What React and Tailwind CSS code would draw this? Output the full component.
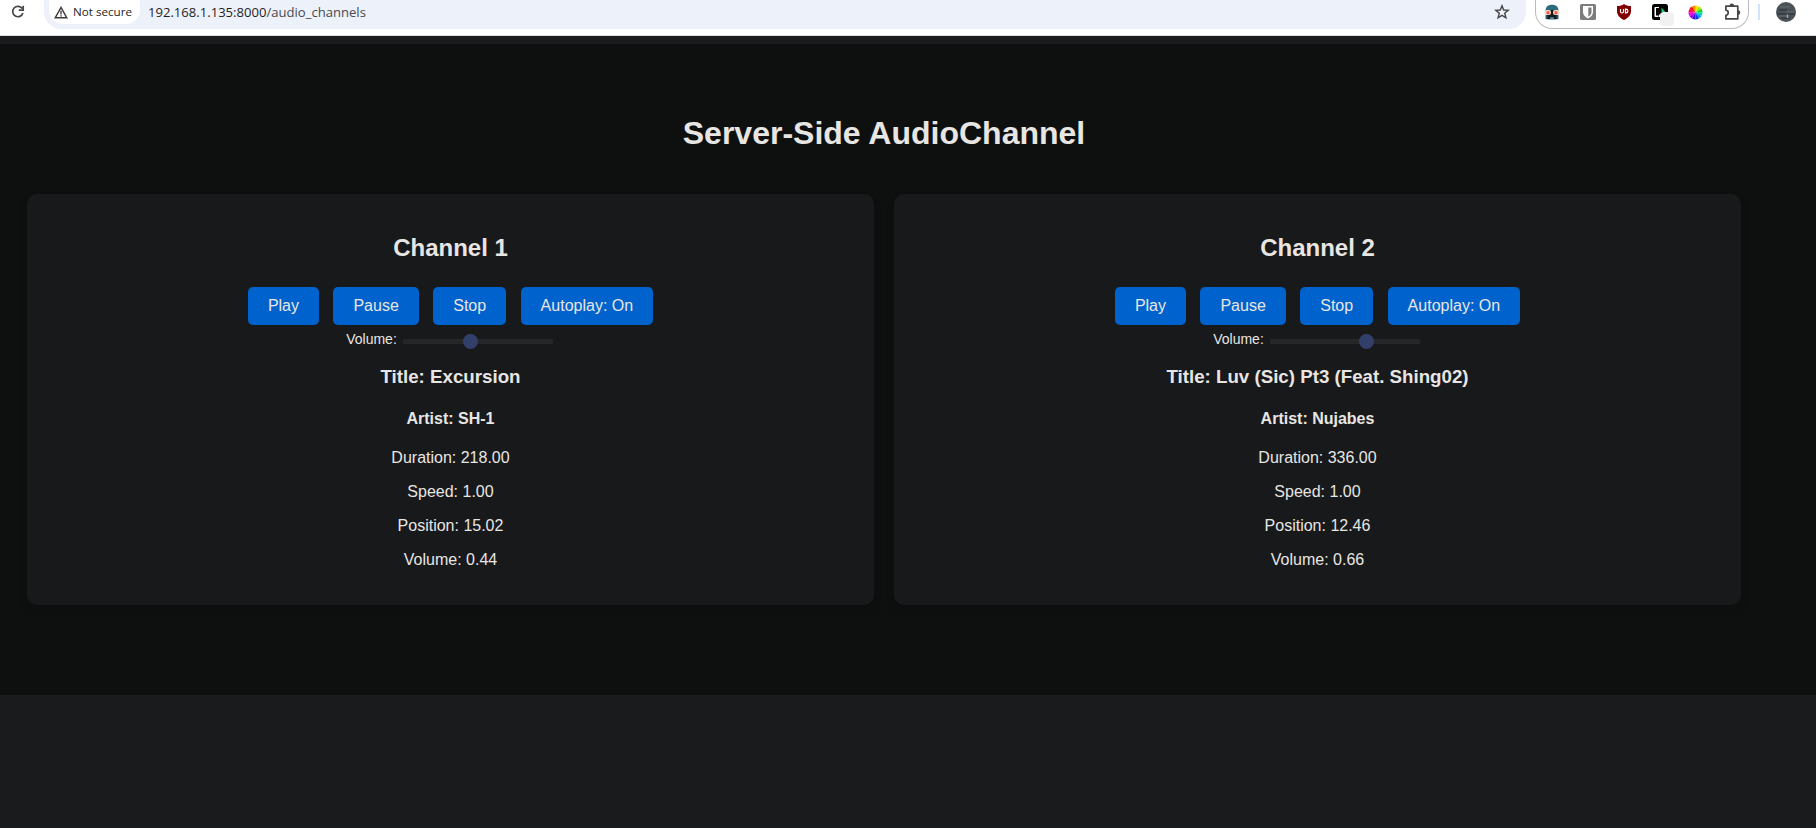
const channels = [
  { name: "Channel 1", title: "Excursion", artist: "SH-1", duration: "218.00", speed: "1.00", position: "15.02", volume: "0.44" },
  { name: "Channel 2", title: "Luv (Sic) Pt3 (Feat. Shing02)", artist: "Nujabes", duration: "336.00", speed: "1.00", position: "12.46", volume: "0.66" },
];

const wheel = ["#ffe600", "#9be800", "#00e020", "#00d8b0", "#00a2ff", "#1430ff", "#3a10d0", "#9a00e8", "#f000e0", "#ff0060", "#ff1000", "#ff8a00"];

function wedge(i) {
  const a = ((i * 30 - 90) * Math.PI) / 180;
  const b = (((i + 1) * 30 - 90) * Math.PI) / 180;
  return `M7.5 7.5L${7.5 + 7 * Math.cos(a)} ${7.5 + 7 * Math.sin(a)}A7 7 0 0 1 ${7.5 + 7 * Math.cos(b)} ${7.5 + 7 * Math.sin(b)}Z`;
}

function Extensions() {
  return (
    <div className="-mt-1 flex h-[33px] w-[214px] shrink-0 items-start rounded-b-[17px] border border-t-0 border-[#b9bbbe] pl-[8px] pt-[8px]">
      <svg width="16" height="16" viewBox="0 0 16 16" className="shrink-0">
        <path d="M1.500 7C1.500 2.800 4 .8 8 .8s6.500 2 6.500 6.200z" fill="#2b6b7c" />
        <path d="M1.500 11h13v4.200h-13z" fill="#2b5f6e" />
        <path d="M3.500 6h9v9.200h-9z" fill="#14191d" />
        <path d="M6 13.200h4v2H6z" fill="#4c8797" />
        <rect x=".8" y="6" width="6.200" height="5" rx="2" fill="#f6d3c6" />
        <rect x="9" y="6" width="6.200" height="5" rx="2" fill="#f6d3c6" />
        <circle cx="4" cy="8.800" r="1.700" fill="#ee6048" />
        <circle cx="12" cy="8.800" r="1.700" fill="#ee6048" />
      </svg>
      <svg width="16" height="16" viewBox="0 0 16 16" className="ml-[20px] shrink-0">
        <rect width="16" height="16" rx="1.500" fill="#7d7d7d" />
        <path d="M3 2h10v6c0 3-2 5-5 6.500C5 13 3 11 3 8z" fill="#fff" />
        <path d="M8.300 3.500h3.200V8c0 2-1.300 3.500-3.200 4.700z" fill="#7d7d7d" />
      </svg>
      <svg width="16" height="16" viewBox="0 0 16 16" className="ml-[20px] shrink-0">
        <path d="M8 0c2 1.500 4 2 7 2v5c0 4-2.500 7-7 9-4.500-2-7-5-7-9V2c3 0 5-.5 7-2z" fill="#800000" />
        <path d="M4.500 5v2.500a1.500 1.500 0 0 0 3 0V5M9.500 5.100v3.800h.5a1.900 1.900 0 0 0 0-3.800z" fill="none" stroke="#fff" strokeWidth="1.200" />
      </svg>
      <svg width="22" height="22" viewBox="0 0 22 22" className="ml-[20px] shrink-0">
        <rect width="16" height="16" rx="2.500" fill="#000" />
        <path d="M2.500 3.500Q2.500 3 3.500 3H7v1H4v7.500h2.500V13H3.500q-1 0-1-1z" fill="#fff" />
        <path d="M7 10.500h1.200V13H7z" fill="#fff" />
        <path d="M9.500 3.500l4 4.500h-4z" fill="#20c878" />
        <rect x="8" y="8" width="14" height="14" rx="3.500" fill="#f1f1f1" />
      </svg>
      <svg width="15" height="15" viewBox="0 0 15 15" className="ml-[14px] mt-px shrink-0">
        {wheel.map((c, i) => <path key={c} d={wedge(i)} fill={c} />)}
      </svg>
      <svg width="18" height="18" viewBox="0 0 18 18" className="-mt-px ml-[20px] shrink-0" fill="none" stroke="#474747" strokeWidth="1.700" strokeLinejoin="round">
        <path d="M2.900 3.100H14.800V15.900H2.900V12.400C4.300 12.200 5.200 11.200 5.200 9.800S4.300 7.400 2.900 7.200Z" />
        <path d="M6.500 2.900a2.300 2.300 0 0 1 4.600 0zM15 7.300a2.300 2.300 0 0 1 0 4.600z" fill="#474747" stroke="none" />
      </svg>
    </div>
  );
}

function BrowserBar() {
  return (
    <header className="flex h-9 items-start overflow-hidden border-b border-[#dcdde0] bg-white">
      <svg width="14" height="14" viewBox="0 0 14 14" className="ml-[11px] mt-[5px] shrink-0" fill="none" stroke="#474747" strokeWidth="1.700">
        <path d="M11.200 3.600A5.200 5.200 0 1 0 11.900 8M12.200 .8v4.400H7.800" />
      </svg>
      <div className="-mt-1 ml-[19px] flex h-[33px] w-[1482px] shrink-0 items-start rounded-b-[17px] bg-[#ecf1fa]">
        <div className="ml-[5px] flex h-[28px] w-[91px] items-center rounded-b-[14px] bg-white pl-[5px] pt-[4px]">
          <svg width="14" height="13" viewBox="0 0 14 13" className="shrink-0" fill="none" stroke="#3c3c3c" strokeWidth="1.400">
            <path d="M7 1.400L12.800 11.800H1.200ZM7 4.800V8.400M7 9.200v1.400" />
          </svg>
          <span className="ml-[5px] whitespace-nowrap font-['Open_Sans',sans-serif] text-[11.650px] font-medium leading-4 text-[#1f1f1f]">Not secure</span>
        </div>
        <span className="ml-[8px] mt-[6px] whitespace-nowrap font-['Open_Sans',sans-serif] text-[13.080px] leading-5 text-[#1f1f1f]">192.168.1.135:8000<span className="text-[#474a4f]">/audio_channels</span></span>
        <svg width="16" height="16" viewBox="0 0 16 16" className="ml-auto mr-[16px] mt-[8px] shrink-0" fill="none" stroke="#474747" strokeWidth="1.400">
          <path d="M8 1.800l1.700 4.200 4.500.3-3.500 2.900 1.200 4.600L8 11.300l-3.900 2.500 1.200-4.600L1.800 6.300l4.500-.3z" />
        </svg>
      </div>
      <div className="ml-[9px]"><Extensions /></div>
      <div className="ml-[9px] mt-[4px] h-4 w-[2px] bg-[#d3e3fd]" />
      <svg width="20" height="20" viewBox="0 0 20 20" className="ml-[16px] mt-[2px] shrink-0">
        <circle cx="10" cy="10" r="10" fill="#4b5358" />
        <path d="M1 12h18M3 8h8M5 16h9" stroke="#343a3e" strokeWidth="1.500" />
        <path d="M3 14h9M10 10h8M4 5h10" stroke="#626c70" />
        <path d="M11.500 12.500v3.500" stroke="#a7ad94" strokeWidth="1.500" />
      </svg>
    </header>
  );
}

function Channel({ channel }) {
  return (
    <section className="h-[411px] flex-1 rounded-[10px] bg-[#18191b] pt-10 text-center shadow-[0_4px_8px_rgba(0,0,0,0.1)]">
      <h2 className="text-[24px] font-bold leading-7">{channel.name}</h2>
      <div className="mt-[25px] flex justify-center gap-[14.450px]">
        {["Play", "Pause", "Stop", "Autoplay: On"].map((label) => (
          <button key={label} className="h-[38px] rounded-[5px] bg-[#0062cc] px-5 text-[16px] leading-[18px]">{label}</button>
        ))}
      </div>
      <div className="flex h-[32px] justify-center pr-[2px]">
        <span className="mt-[6px] text-[14px] leading-4">Volume:</span>
        <div className="relative ml-[6px] mt-[14px] h-[5px] w-[150px] bg-[#242628]">
          <div className="absolute -top-[5px] size-[15px] rounded-full bg-[#333f6b]" style={{ left: Number(channel.volume) * 135 + 0.5 }} />
        </div>
      </div>
      <h3 className="mt-[9px] text-[18.720px] font-bold leading-[22px]">Title: {channel.title}</h3>
      <h4 className="mt-[22px] text-[16px] font-bold leading-[18px]">Artist: {channel.artist}</h4>
      <div className="mt-[21px] flex flex-col gap-4 text-[16px] leading-[18px]">
        <p>Duration: {channel.duration}</p>
        <p>Speed: {channel.speed}</p>
        <p>Position: {channel.position}</p>
        <p>Volume: {channel.volume}</p>
      </div>
    </section>
  );
}

export default function App() {
  return (
    <div className="h-[828px] overflow-hidden bg-[#1a1b1d] font-['Liberation_Sans',Arial,sans-serif] text-[#e8e6e3]">
      <BrowserBar />
      <main className="mt-2 h-[651px] bg-[#0e100f] pl-[27px] pr-[75px] pt-[71px]">
        <h1 className="text-center text-[32px] font-bold leading-9">Server-Side AudioChannel</h1>
        <div className="mt-[43px] flex gap-5">
          {channels.map((c) => <Channel key={c.name} channel={c} />)}
        </div>
      </main>
    </div>
  );
}
